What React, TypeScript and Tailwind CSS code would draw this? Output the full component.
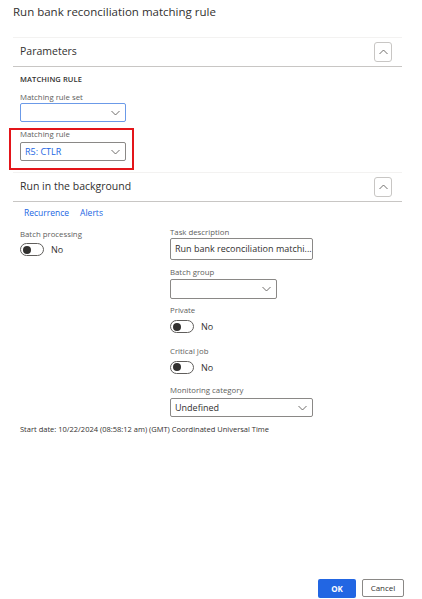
import React from "react";

const Chevron = ({ up = false }: { up?: boolean }) => (
  <svg width="9" height="6" viewBox="0 0 9 6" className="block">
    <path
      d={up ? "M0.5 5 L4.5 1 L8.5 5" : "M0.5 1 L4.5 5 L8.5 1"}
      fill="none"
      stroke="#605e5c"
      strokeWidth="0.9"
    />
  </svg>
);

const CollapseBtn = () => (
  <div className="w-[18px] h-[20px] border border-[#c8c6c4] rounded-[3px] flex items-center justify-center bg-white">
    <Chevron up />
  </div>
);

const Label = ({ children }: { children: React.ReactNode }) => (
  <div className="text-[7.8px] leading-[12px] text-[#605e5c]">{children}</div>
);

const Select = ({
  w,
  h = "h-[19px]",
  value,
  border = "border-[#8a8886]",
  valueCls = "text-[#323130]",
}: {
  w: string;
  h?: string;
  value?: string;
  border?: string;
  valueCls?: string;
}) => (
  <div className={`${w} ${h} border ${border} rounded-[2px] flex items-center justify-between pl-[4px] pr-[5px] bg-white`}>
    <span className={`text-[9px] ${valueCls}`}>{value}</span>
    <Chevron />
  </div>
);

const Toggle = () => (
  <div className="flex items-center gap-[7px]">
    <div className="w-[24px] h-[13px] border border-[#605e5c] rounded-full flex items-center pl-[2px]">
      <div className="w-[8px] h-[8px] rounded-full bg-[#323130]" />
    </div>
    <span className="text-[9px] text-[#323130]">No</span>
  </div>
);

const SectionHeader = ({ title }: { title: string }) => (
  <div className="border-t border-[#f3f2f1] h-[30px] border-b border-b-[#c8c6c4] flex items-center justify-between pl-[7px] pr-[10px]">
    <span className="text-[10.5px] text-[#323130]">{title}</span>
    <CollapseBtn />
  </div>
);

export default function App() {
  return (
    <div
      className="w-[422px] h-[599px] bg-white flex flex-col text-[#323130]"
      style={{ fontFamily: '"Open Sans", "Noto Sans", sans-serif' }}
    >
      <div className="pl-[13px] pt-[3px] text-[11.5px] leading-[18px] text-[#323130]">
        Run bank reconciliation matching rule
      </div>

      <div className="ml-[13px] w-[389px] mt-[16px]">
        <SectionHeader title="Parameters" />
        <div className="pl-[7px] pt-[6px]">
          <div className="text-[7.5px] font-semibold leading-[12px] tracking-[0.1px] text-[#323130]">
            MATCHING RULE
          </div>
          <div className="mt-[6px]">
            <Label>Matching rule set</Label>
            <div className="mt-[0px]">
              <Select w="w-[106px]" border="border-[#6b9ae8]" />
            </div>
          </div>
          <div className="relative mt-[6px]">
            <div className="absolute left-[-11px] top-0 w-[125px] h-[42px] border-2 border-[#e3151a] pointer-events-none" />
            <Label>Matching rule</Label>
            <div className="mt-[2px]">
              <Select w="w-[106px]" value="R5: CTLR" valueCls="text-[#2266e3]" />
            </div>
          </div>
        </div>
        <div className="mt-[11px]">
          <SectionHeader title="Run in the background" />
        </div>
        <div className="pl-[11px] pt-[4px] flex gap-[11px] text-[8.5px] text-[#2266e3] leading-[14px]">
          <span>Recurrence</span>
          <span>Alerts</span>
        </div>
        <div className="pl-[7px] mt-[6px] flex">
          <div className="w-[150px] flex flex-col pt-[2px]">
            <Label>Batch processing</Label>
            <div className="mt-[3px]">
              <Toggle />
            </div>
          </div>
          <div className="flex flex-col">
            <Label>Task description</Label>
            <div className="w-[143px] h-[22px] border border-[#8a8886] rounded-[2px] flex items-center pl-[4px] text-[9px] text-[#323130] whitespace-nowrap overflow-hidden">
              Run bank reconciliation matchi...
            </div>
            <div className="mt-[6px]">
              <Label>Batch group</Label>
              <div className="mt-[1px]">
                <Select w="w-[107px]" h="h-[20px]" />
              </div>
            </div>
            <div className="mt-[5px]">
              <Label>Private</Label>
              <div className="mt-[4px]">
                <Toggle />
              </div>
            </div>
            <div className="mt-[11px]">
              <Label>Critical Job</Label>
              <div className="mt-[4px]">
                <Toggle />
              </div>
            </div>
            <div className="mt-[10px]">
              <Label>Monitoring category</Label>
              <div className="mt-[2px]">
                <Select w="w-[143px]" value="Undefined" />
              </div>
            </div>
          </div>
        </div>
        <div className="pl-[7px] mt-[6px] text-[7.5px] leading-[12px] text-[#323130]">
          Start date: 10/22/2024 (08:58:12 am) (GMT) Coordinated Universal Time
        </div>
      </div>

      <div className="mt-auto flex justify-end gap-[6px] pr-[18px] pb-[1px]">
        <div className="w-[38px] h-[19px] bg-[#2266e3] rounded-[2px] flex items-center justify-center text-white text-[8px] font-bold">
          OK
        </div>
        <div className="w-[42px] h-[18px] border border-[#8a8886] rounded-[2px] flex items-center justify-center text-[8px] text-[#323130]">
          Cancel
        </div>
      </div>
    </div>
  );
}
